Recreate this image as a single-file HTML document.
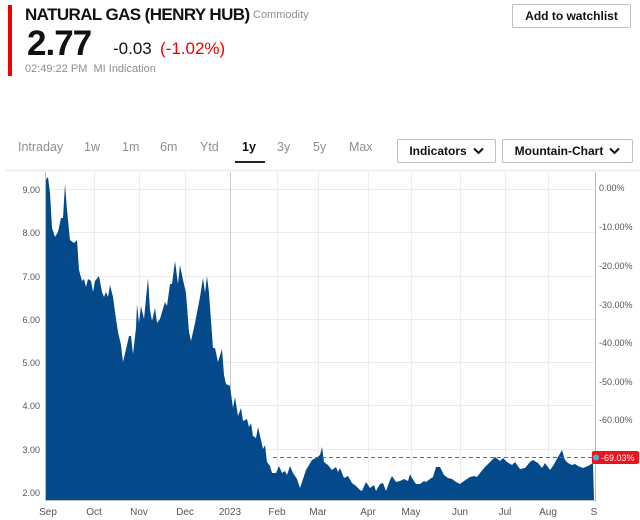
<!DOCTYPE html>
<html><head><meta charset="utf-8"><style>
body{margin:0;width:640px;height:520px;background:#fff;font-family:"Liberation Sans",Arial,sans-serif;position:relative;overflow:hidden}
.a{position:absolute;white-space:nowrap}
.btn{position:absolute;border:1px solid #b9c0c6;border-radius:2px;font-weight:bold;font-size:12px;color:#111;text-align:center;box-sizing:border-box}
.tab{position:absolute;top:140px;font-size:12.5px;color:#8a8f94}
.chev{display:inline-block;vertical-align:middle;margin-left:6px;margin-top:-2px}
</style></head><body>
<div class="a" style="left:8px;top:5px;width:4px;height:71px;background:#e00"></div>
<div class="a" style="left:25px;top:5px;font-size:17px;font-weight:bold;color:#111;letter-spacing:-0.6px">NATURAL GAS (HENRY HUB)</div>
<div class="a" style="left:253px;top:9px;font-size:11px;color:#8a8f94">Commodity</div>
<div class="a" style="left:27px;top:24px;font-size:35px;font-weight:bold;color:#111;letter-spacing:-1px">2.77</div>
<div class="a" style="left:113px;top:39px;font-size:17px;color:#111">-0.03</div>
<div class="a" style="left:160px;top:39px;font-size:17px;color:#e00">(-1.02%)</div>
<div class="a" style="left:25px;top:63px;font-size:11px;color:#8a8f94">02:49:22 PM &nbsp;MI Indication</div>
<div class="btn" style="left:512px;top:4px;width:119px;height:24px;line-height:22px">Add to watchlist</div>

<div class="tab" style="left:18px">Intraday</div>
<div class="tab" style="left:84px">1w</div>
<div class="tab" style="left:122px">1m</div>
<div class="tab" style="left:160px">6m</div>
<div class="tab" style="left:200px">Ytd</div>
<div class="tab" style="left:242px;color:#111;font-weight:bold">1y</div>
<div class="tab" style="left:277px">3y</div>
<div class="tab" style="left:313px">5y</div>
<div class="tab" style="left:349px">Max</div>
<div class="a" style="left:235px;top:161px;width:30px;height:2px;background:#222"></div>
<div class="btn" style="left:397px;top:139px;width:99px;height:24px;line-height:22px">Indicators<svg class="chev" width="11" height="8" viewBox="0 0 11 8"><path d="M1 1.5L5.5 6L10 1.5" fill="none" stroke="#111" stroke-width="2"/></svg></div>
<div class="btn" style="left:502px;top:139px;width:131px;height:24px;line-height:22px">Mountain-Chart<svg class="chev" width="11" height="8" viewBox="0 0 11 8"><path d="M1 1.5L5.5 6L10 1.5" fill="none" stroke="#111" stroke-width="2"/></svg></div>

<svg class="a" style="left:0;top:0" width="640" height="520" font-family="Liberation Sans,Arial,sans-serif">
<line x1="6" y1="170.5" x2="640" y2="170.5" stroke="#eceff1" stroke-width="2"/>
<g stroke="#ececec" stroke-width="1">
<line x1="45" y1="189.5" x2="595" y2="189.5"/><line x1="45" y1="232.5" x2="595" y2="232.5"/><line x1="45" y1="276.5" x2="595" y2="276.5"/><line x1="45" y1="319.5" x2="595" y2="319.5"/><line x1="45" y1="362.5" x2="595" y2="362.5"/><line x1="45" y1="405.5" x2="595" y2="405.5"/><line x1="45" y1="449.5" x2="595" y2="449.5"/><line x1="45" y1="492.5" x2="595" y2="492.5"/>
<line x1="94.5" y1="172" x2="94.5" y2="500"/><line x1="139.5" y1="172" x2="139.5" y2="500"/><line x1="185.5" y1="172" x2="185.5" y2="500"/><line x1="277.5" y1="172" x2="277.5" y2="500"/><line x1="318.5" y1="172" x2="318.5" y2="500"/><line x1="368.5" y1="172" x2="368.5" y2="500"/><line x1="411.5" y1="172" x2="411.5" y2="500"/><line x1="460.5" y1="172" x2="460.5" y2="500"/><line x1="505.5" y1="172" x2="505.5" y2="500"/><line x1="548.5" y1="172" x2="548.5" y2="500"/>
</g>
<line x1="230.5" y1="172" x2="230.5" y2="500" stroke="#cfcfcf"/>
<polygon fill="#044a8a" points="46,500 46,180 47,178 48,177 50,193 52,228 55,237 58,232 61,218 63,218 65,184 67,210 70,240 74,243 77,240 79,270 82,281 84,279 86,287 88,279 91,281 93,292 95,281 99,276 102,292 104,297 106,292 108,297 110,285 113,297 116,319 118,332 121,345 123,362 127,345 129,336 131,336 133,354 136,328 137,304 139,323 141,306 144,319 148,278 150,310 152,321 155,308 157,323 160,319 165,302 167,306 170,284 172,284 175,261 178,284 180,265 183,280 186,293 189,332 191,341 195,323 200,297 203,278 205,293 207,276 209,293 213,348 215,348 218,362 222,349 224,375 226,384 230,386 233,408 235,397 238,416 241,408 243,421 247,419 249,427 251,423 253,436 256,438 258,427 261,440 263,449 265,445 267,462 270,466 272,473 276,473 279,466 282,473 285,471 287,475 290,466 293,473 297,479 300,488 306,470 312,460 316,458 320,455 322,447 324,462 328,465 332,470 336,467 338,472 340,468 344,478 348,476 352,483 356,486 360,490 362,491 366,482 370,488 374,485 376,491 380,484 383,483 386,491 390,480 392,476 396,482 400,481 404,479 408,481 410,474 412,478 416,484 420,484 424,481 426,482 430,479 433,477 436,467 440,467 444,475 448,478 452,479 456,482 460,484 464,481 470,477 474,476 477,477 480,473 485,467 490,462 495,457 500,461 503,458 507,462 512,465 515,462 520,469 525,468 530,462 533,460 538,463 542,468 545,463 550,470 553,466 558,457 562,450 565,460 568,463 572,465 575,464 578,466 583,468 588,466 593,463 594,500"/>
<line x1="273" y1="457.5" x2="594" y2="457.5" stroke="#f03030" stroke-dasharray="4,3"/>
<line x1="45.5" y1="172" x2="45.5" y2="501" stroke="#bbb"/>
<line x1="595.5" y1="172" x2="595.5" y2="501" stroke="#bbb"/>
<line x1="45" y1="500.5" x2="596" y2="500.5" stroke="#bbb"/>
<g font-size="9" fill="#555" text-anchor="end">
<text x="40" y="193">9.00</text><text x="40" y="236">8.00</text><text x="40" y="280">7.00</text><text x="40" y="323">6.00</text><text x="40" y="366">5.00</text><text x="40" y="409">4.00</text><text x="40" y="453">3.00</text><text x="40" y="496">2.00</text>
</g>
<g font-size="9" fill="#555">
<text x="599" y="191">0.00%</text><text x="599" y="230">-10.00%</text><text x="599" y="269">-20.00%</text><text x="599" y="308">-30.00%</text><text x="599" y="346">-40.00%</text><text x="599" y="385">-50.00%</text><text x="599" y="423">-60.00%</text>
</g>
<g font-size="10" fill="#555" text-anchor="middle">
<text x="48" y="515">Sep</text><text x="94" y="515">Oct</text><text x="139" y="515">Nov</text><text x="185" y="515">Dec</text><text x="230" y="515">2023</text><text x="277" y="515">Feb</text><text x="318" y="515">Mar</text><text x="368" y="515">Apr</text><text x="411" y="515">May</text><text x="460" y="515">Jun</text><text x="505" y="515">Jul</text><text x="548" y="515">Aug</text><text x="594" y="515">S</text>
</g>
<rect x="592" y="451" width="47" height="13" rx="2" fill="#e8141e"/>
<circle cx="596" cy="457.5" r="3" fill="#3fb3e8"/>
<text x="601" y="461" font-size="9" fill="#fff">-69.03%</text>
</svg>
</body></html>
